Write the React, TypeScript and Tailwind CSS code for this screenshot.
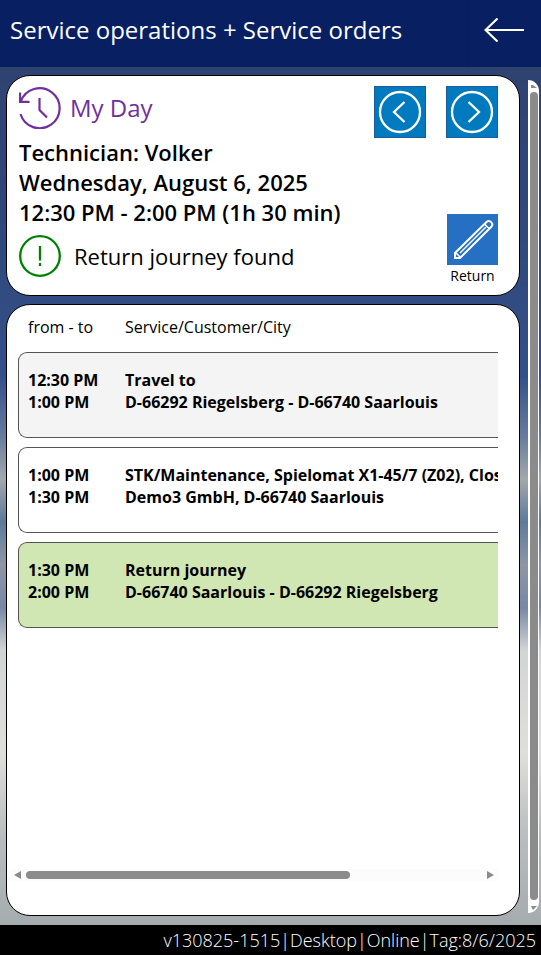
import React from "react";

type Entry = {
  from: string;
  to: string;
  title: string;
  place: string;
  tone: string;
};

const entries: Entry[] = [
  { from: "12:30 PM", to: "1:00 PM", title: "Travel to", place: "D-66292 Riegelsberg - D-66740 Saarlouis", tone: "bg-[#f4f4f4]" },
  { from: "1:00 PM", to: "1:30 PM", title: "STK/Maintenance, Spielomat X1-45/7 (Z02), Closed", place: "Demo3 GmbH, D-66740 Saarlouis", tone: "bg-white" },
  { from: "1:30 PM", to: "2:00 PM", title: "Return journey", place: "D-66740 Saarlouis - D-66292 Riegelsberg", tone: "bg-[#d1e7b3]" },
];

function StepButton({ label, path }: { label: string; path: string }) {
  return (
    <button type="button" aria-label={label} className="size-[52px] border border-[#1d5a99] bg-[#007abe] text-white">
      <svg viewBox="0 0 50 50" className="size-full" fill="none" stroke="currentColor" strokeWidth="2.3">
        <circle cx="25" cy="25" r="20" />
        <path d={path} />
      </svg>
    </button>
  );
}

function Header() {
  return (
    <header className="flex h-[67px] shrink-0 bg-[#081f61] text-white">
      <h1 className="min-w-0 flex-1 self-center truncate pb-2 pl-[10px] text-2xl leading-8">Service operations + Service orders</h1>
      <button type="button" aria-label="Back" className="w-[74px] shrink-0 border-l border-[#051a6b] pb-2 pl-3">
        <svg viewBox="0 0 40 24" className="ml-1 h-6 w-10" fill="none" stroke="currentColor" strokeWidth="2.2">
          <path d="M40 12H1.500M13.500 0.500L1.500 12l12 11.500" />
        </svg>
      </button>
    </header>
  );
}

function DaySummary() {
  return (
    <section className="flex justify-between rounded-[24px] border border-black bg-white pt-[10px] pr-[21px] pb-2 pl-3">
      <div className="pb-[10px]">
        <h2 className="flex h-11 items-center gap-[9px] text-2xl font-medium text-[#7030a0]">
          <svg viewBox="0 0 42 42" className="size-[42px]" fill="none" stroke="currentColor" strokeWidth="2.200">
            <path d="M1.500 27A20 20 0 1 0 1.800 14.500M1 5.500v9.300h9.500" />
            <path d="M20.500 11v12l7.500 7.500" />
          </svg>
          My Day
        </h2>
        <div className="mt-[7px] text-[22px] leading-[30px] font-semibold">
          <p>Technician: Volker</p>
          <p>Wednesday, August 6, 2025</p>
          <p>12:30 PM - 2:00 PM (1h 30 min)</p>
        </div>
        <p className="mt-2 flex items-center gap-[13px] text-[22px] font-medium">
          <svg viewBox="0 0 42 42" className="size-[42px] text-[#008000]" fill="none" stroke="currentColor" strokeWidth="2.300">
            <circle cx="21" cy="21" r="19.800" />
            <path d="M21 11v14.500M21 28v3" />
          </svg>
          Return journey found
        </p>
      </div>
      <div className="flex shrink-0 flex-col items-end justify-between">
        <div className="flex gap-5">
          <StepButton label="Previous day" path="M29.500 15L19 25l10.500 10" />
          <StepButton label="Next day" path="M21.500 15L32 25l-10.500 10" />
        </div>
        <button type="button" className="flex w-[51px] flex-col items-center text-sm leading-[22px]">
          <svg viewBox="0 0 51 51" className="size-[51px] bg-[#2670c3]" fill="none" stroke="white" strokeWidth="2">
            <path d="M8 44V39L39.500 8a3.400 3.400 0 0 1 4.800 4.800L13 44z" />
            <path d="M13 39L39 13" strokeWidth="1.5" />
            <path d="M8.500 38.500l5 5M37.500 10l4.800 4.800" strokeWidth="1.5" />
          </svg>
          Return
        </button>
      </div>
    </section>
  );
}

function Schedule() {
  return (
    <section className="flex flex-1 flex-col justify-between rounded-[24px] border border-black bg-white pr-[21px] pb-[34px]">
      <div className="overflow-hidden pl-[11px]">
        <table className="w-[580px] border-separate border-spacing-x-0 border-spacing-y-[9px] text-left text-base leading-[22px] whitespace-nowrap">
          <thead>
            <tr className="h-[29px]">
              <th scope="col" className="w-[107px] pb-1 pl-[10px] font-normal">from - to</th>
              <th scope="col" className="pb-1 font-normal">Service/Customer/City</th>
            </tr>
          </thead>
          <tbody>
            {entries.map((e) => (
              <tr key={e.from} className="h-[86px] align-top font-bold">
                <td className={`rounded-l-[9px] border-y border-l border-[#555] pt-4 pl-[9px] ${e.tone}`}>
                  {e.from}
                  <br />
                  {e.to}
                </td>
                <td className={`border-y border-[#555] pt-4 ${e.tone}`}>
                  {e.title}
                  <br />
                  {e.place}
                </td>
              </tr>
            ))}
          </tbody>
        </table>
      </div>
      <div className="ml-[3px] flex h-3 items-center bg-[#fcfcfc] px-1 text-[#8b8b8b]">
        <svg viewBox="0 0 7 8" className="h-2 w-[7px]" fill="currentColor"><path d="M7 0v8L0 4z" /></svg>
        <div className="mx-[5px] flex-1">
          <div className="h-2 w-[71%] rounded-full bg-[#8b8b8b]" />
        </div>
        <svg viewBox="0 0 7 8" className="h-2 w-[7px]" fill="currentColor"><path d="M0 0v8l7-4z" /></svg>
      </div>
    </section>
  );
}

function PageScrollbar() {
  return (
    <div className="mt-[13px] mb-3 flex w-[11px] flex-col items-center rounded-r-[11px] bg-white text-[#8b8b8b]">
      <svg viewBox="0 0 8 8" className="mt-1 size-2 shrink-0" fill="currentColor"><path d="M1 1h2l4 3H1z" /></svg>
      <div className="w-2 flex-1 rounded-full bg-[#8b8b8b]" />
      <svg viewBox="0 0 8 13" className="h-[13px] w-2 shrink-0" fill="currentColor"><path d="M1 6h6L3 10z" /></svg>
    </div>
  );
}

export default function App() {
  return (
    <div className="flex min-h-screen flex-col font-['Open_Sans',sans-serif] text-black">
      <Header />
      <div className="flex flex-1 bg-[linear-gradient(180deg,#2f4371_0%,#2f4778_15%,#34508a_36%,#667b9d_43%,#a3a8ac_48%,#5e7a9b_53%,#8d97a5_58%,#7787a5_63%,#d3d5d5_68%,#dedfdc_80%,#b9bcbd_90%,#a5acae_100%)]">
        <main className="flex min-w-0 flex-1 flex-col gap-2 pt-2 pr-2 pb-[9px] pl-1.5">
          <DaySummary />
          <Schedule />
        </main>
        <div className="flex shrink-0 pr-0.5">
          <PageScrollbar />
        </div>
      </div>
      <footer className="flex h-[30px] shrink-0 items-center justify-end bg-black pr-[5px] text-lg font-light text-white">
        v130825-1515|Desktop|Online|Tag:8/6/2025
      </footer>
    </div>
  );
}
